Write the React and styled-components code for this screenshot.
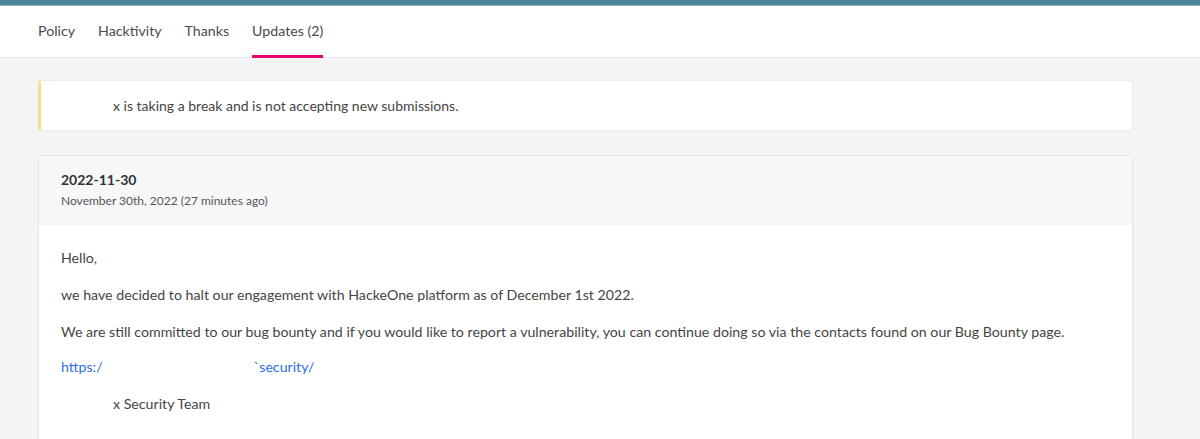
import React from 'react'
import styled, { createGlobalStyle } from 'styled-components'

const GlobalStyle = createGlobalStyle`
  html, body {
    margin: 0;
    padding: 0;
    background: #f4f4f4;
    font-family: Lato, "Noto Sans", sans-serif;
    color: #444;
  }
`

const TopBar = styled.div`
  height: 5px;
  background: #4f8397;
  border-bottom: 1px solid #8fb1bf;
`

const Nav = styled.nav`
  display: flex;
  gap: 23px;
  padding: 0 38px;
  height: 51px;
  background: #fff;
  border-bottom: 1px solid #e8e8e8;
`

const Tab = styled.a`
  display: flex;
  align-items: center;
  font-size: 14.2px;
  color: #4a4a4a;
  text-decoration: none;
  border-bottom: 3px solid ${props => (props.$active ? '#e8036f' : 'transparent')};
  margin-bottom: -1px;
`

const Content = styled.main`
  display: flex;
  flex-direction: column;
  gap: 24px;
  padding: 22px 67px 0 38px;
`

const Alert = styled.div`
  display: flex;
  align-items: center;
  height: 49px;
  background: #fff;
  border: 1px solid #ececec;
  border-left: 3px solid #fcd994;
  border-radius: 3px;
  padding-left: 72px;
  font-size: 14px;
  color: #444;
`

const Card = styled.section`
  background: #fff;
  border: 1px solid #e6e6e6;
  border-radius: 3px;
  box-shadow: 0 1px 2px rgba(0, 0, 0, 0.05);
`

const CardHeader = styled.header`
  background: #f6f7f9;
  height: 69px;
  box-sizing: border-box;
  padding: 14px 22px 0;
`

const Title = styled.div`
  font-size: 14px;
  font-weight: 700;
  color: #333;
  line-height: 20px;
`

const Sub = styled.div`
  margin-top: 2px;
  font-size: 12px;
  color: #555;
  line-height: 18px;
`

const CardBody = styled.div`
  padding: 23px 22px 14px;
`

const P = styled.p`
  margin: 0 0 ${props => props.$mb ?? 17}px;
  font-size: 14.2px;
  line-height: 20px;
  color: #444;
  padding-left: ${props => props.$indent || 0}px;
`

const Link = styled.a`
  color: #2d6ee6;
  text-decoration: none;
`

const Gap = styled.span`
  display: inline-block;
  width: ${props => props.$w}px;
`

export default function App() {
  return (
    <>
      <GlobalStyle />
      <TopBar />
      <Nav>
        <Tab href="#">Policy</Tab>
        <Tab href="#">Hacktivity</Tab>
        <Tab href="#">Thanks</Tab>
        <Tab href="#" $active>Updates (2)</Tab>
      </Nav>
      <Content>
        <Alert>x is taking a break and is not accepting new submissions.</Alert>
        <Card>
          <CardHeader>
            <Title>2022-11-30</Title>
            <Sub>November 30th, 2022 (27 minutes ago)</Sub>
          </CardHeader>
          <CardBody>
            <P>Hello,</P>
            <P>we have decided to halt our engagement with HackeOne platform as of December 1st 2022.</P>
            <P $mb={15}>We are still committed to our bug bounty and if you would like to report a vulnerability, you can continue doing so via the contacts found on our Bug Bounty page.</P>
            <P>
              <Link href="#">https:/<Gap $w={151} />`security/</Link>
            </P>
            <P $indent={52}>x Security Team</P>
          </CardBody>
        </Card>
      </Content>
    </>
  )
}
